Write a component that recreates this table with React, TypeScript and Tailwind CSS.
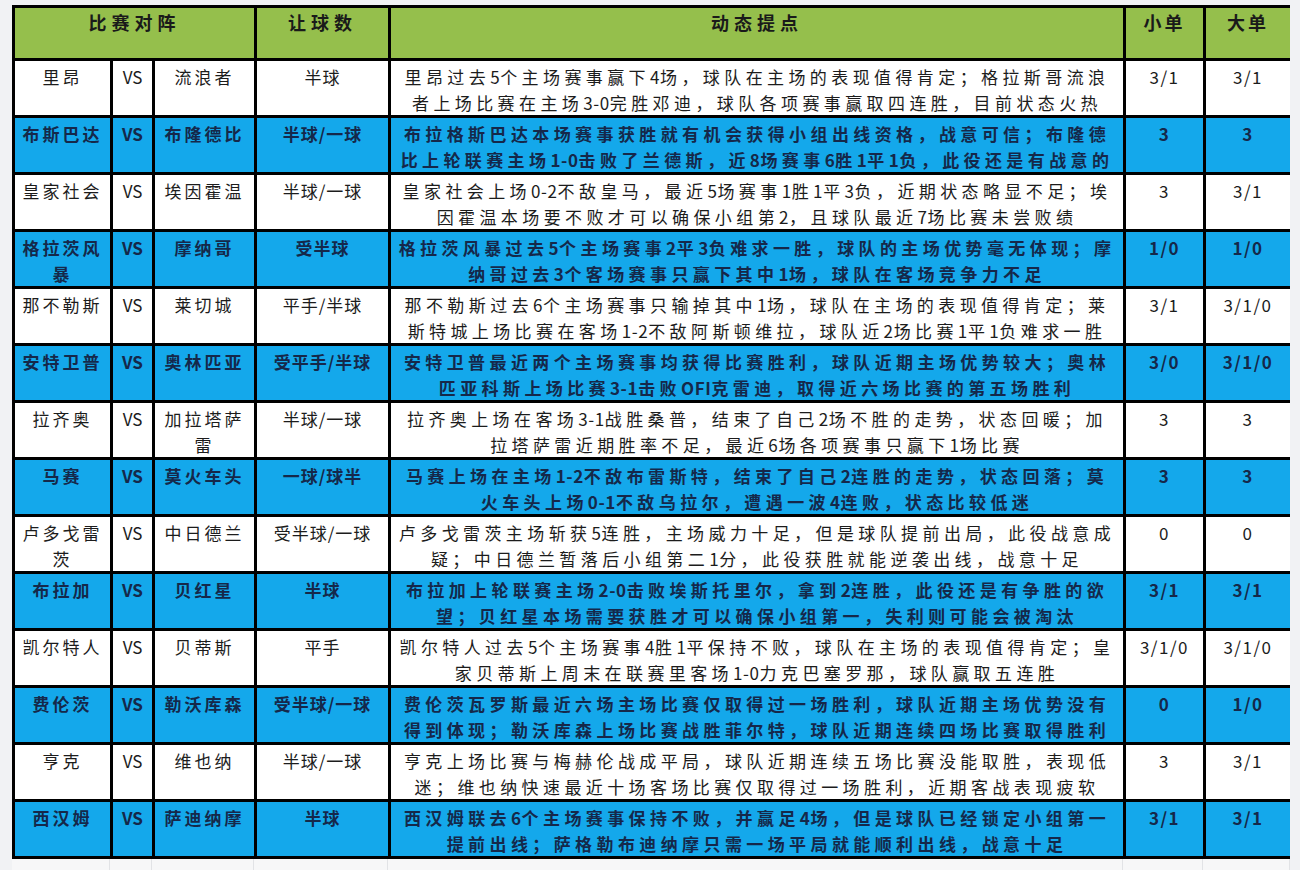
type Row = {
  home: string[];
  away: string[];
  handicap: string;
  lines: [string, string];
  small: string;
  big: string;
};

const rows: Row[] = [
  {
    home: ["里昂"],
    away: ["流浪者"],
    handicap: "半球",
    lines: [
      "里昂过去5个主场赛事赢下4场，球队在主场的表现值得肯定；格拉斯哥流浪",
      "者上场比赛在主场3-0完胜邓迪，球队各项赛事赢取四连胜，目前状态火热",
    ],
    small: "3/1",
    big: "3/1",
  },
  {
    home: ["布斯巴达"],
    away: ["布隆德比"],
    handicap: "半球/一球",
    lines: [
      "布拉格斯巴达本场赛事获胜就有机会获得小组出线资格，战意可信；布隆德",
      "比上轮联赛主场1-0击败了兰德斯，近8场赛事6胜1平1负，此役还是有战意的",
    ],
    small: "3",
    big: "3",
  },
  {
    home: ["皇家社会"],
    away: ["埃因霍温"],
    handicap: "半球/一球",
    lines: [
      "皇家社会上场0-2不敌皇马，最近5场赛事1胜1平3负，近期状态略显不足；埃",
      "因霍温本场要不败才可以确保小组第2，且球队最近7场比赛未尝败绩",
    ],
    small: "3",
    big: "3/1",
  },
  {
    home: ["格拉茨风", "暴"],
    away: ["摩纳哥"],
    handicap: "受半球",
    lines: [
      "格拉茨风暴过去5个主场赛事2平3负难求一胜，球队的主场优势毫无体现；摩",
      "纳哥过去3个客场赛事只赢下其中1场，球队在客场竞争力不足",
    ],
    small: "1/0",
    big: "1/0",
  },
  {
    home: ["那不勒斯"],
    away: ["莱切城"],
    handicap: "平手/半球",
    lines: [
      "那不勒斯过去6个主场赛事只输掉其中1场，球队在主场的表现值得肯定；莱",
      "斯特城上场比赛在客场1-2不敌阿斯顿维拉，球队近2场比赛1平1负难求一胜",
    ],
    small: "3/1",
    big: "3/1/0",
  },
  {
    home: ["安特卫普"],
    away: ["奥林匹亚"],
    handicap: "受平手/半球",
    lines: [
      "安特卫普最近两个主场赛事均获得比赛胜利，球队近期主场优势较大；奥林",
      "匹亚科斯上场比赛3-1击败OFI克雷迪，取得近六场比赛的第五场胜利",
    ],
    small: "3/0",
    big: "3/1/0",
  },
  {
    home: ["拉齐奥"],
    away: ["加拉塔萨", "雷"],
    handicap: "半球/一球",
    lines: [
      "拉齐奥上场在客场3-1战胜桑普，结束了自己2场不胜的走势，状态回暖；加",
      "拉塔萨雷近期胜率不足，最近6场各项赛事只赢下1场比赛",
    ],
    small: "3",
    big: "3",
  },
  {
    home: ["马赛"],
    away: ["莫火车头"],
    handicap: "一球/球半",
    lines: [
      "马赛上场在主场1-2不敌布雷斯特，结束了自己2连胜的走势，状态回落；莫",
      "火车头上场0-1不敌乌拉尔，遭遇一波4连败，状态比较低迷",
    ],
    small: "3",
    big: "3",
  },
  {
    home: ["卢多戈雷", "茨"],
    away: ["中日德兰"],
    handicap: "受半球/一球",
    lines: [
      "卢多戈雷茨主场斩获5连胜，主场威力十足，但是球队提前出局，此役战意成",
      "疑；中日德兰暂落后小组第二1分，此役获胜就能逆袭出线，战意十足",
    ],
    small: "0",
    big: "0",
  },
  {
    home: ["布拉加"],
    away: ["贝红星"],
    handicap: "半球",
    lines: [
      "布拉加上轮联赛主场2-0击败埃斯托里尔，拿到2连胜，此役还是有争胜的欲",
      "望；贝红星本场需要获胜才可以确保小组第一，失利则可能会被淘汰",
    ],
    small: "3/1",
    big: "3/1",
  },
  {
    home: ["凯尔特人"],
    away: ["贝蒂斯"],
    handicap: "平手",
    lines: [
      "凯尔特人过去5个主场赛事4胜1平保持不败，球队在主场的表现值得肯定；皇",
      "家贝蒂斯上周末在联赛里客场1-0力克巴塞罗那，球队赢取五连胜",
    ],
    small: "3/1/0",
    big: "3/1/0",
  },
  {
    home: ["费伦茨"],
    away: ["勒沃库森"],
    handicap: "受半球/一球",
    lines: [
      "费伦茨瓦罗斯最近六场主场比赛仅取得过一场胜利，球队近期主场优势没有",
      "得到体现；勒沃库森上场比赛战胜菲尔特，球队近期连续四场比赛取得胜利",
    ],
    small: "0",
    big: "1/0",
  },
  {
    home: ["亨克"],
    away: ["维也纳"],
    handicap: "半球/一球",
    lines: [
      "亨克上场比赛与梅赫伦战成平局，球队近期连续五场比赛没能取胜，表现低",
      "迷；维也纳快速最近十场客场比赛仅取得过一场胜利，近期客战表现疲软",
    ],
    small: "3",
    big: "3/1",
  },
  {
    home: ["西汉姆"],
    away: ["萨迪纳摩"],
    handicap: "半球",
    lines: [
      "西汉姆联去6个主场赛事保持不败，并赢足4场，但是球队已经锁定小组第一",
      "提前出线；萨格勒布迪纳摩只需一场平局就能顺利出线，战意十足",
    ],
    small: "3/1",
    big: "3/1",
  },
];

const font = { fontFamily: '"Noto Sans CJK SC", "Noto Sans", sans-serif' };

// ASCII runs (digits, dashes, letters) get tighter spacing than the CJK text
function Mixed({ text }: { text: string }) {
  const parts = text.split(/([\x20-\x7e]+)/).filter((p) => p !== "");
  return (
    <>
      {parts.map((p, i) =>
        /^[\x20-\x7e]+$/.test(p) ? (
          <span key={i} className="tracking-[0.6px]">
            {p}
          </span>
        ) : (
          <span key={i}>{p}</span>
        )
      )}
    </>
  );
}

function Lines({ items }: { items: string[] }) {
  return (
    <>
      {items.map((t, i) => (
        <div key={i} className="whitespace-nowrap">
          <Mixed text={t} />
        </div>
      ))}
    </>
  );
}

const head = "bg-[#95bf4c] pt-[1px] text-center text-[18px] font-bold leading-[26px] text-[#1a1a1a]";

export default function App() {
  return (
    <div className="min-h-[870px] w-[1300px] bg-[#f1f2f4] pt-[5px] pl-[12px]" style={font}>
      <div className="grid w-[1278px] grid-cols-[95px_39px_99px_131px_732px_77px_84px] gap-[3px] bg-black p-[3px]">
        {/* header */}
        <div className={`${head} col-span-3 h-[50px] tracking-[5px]`}>比赛对阵</div>
        <div className={`${head} tracking-[5px]`}>让球数</div>
        <div className={`${head} tracking-[5px]`}>动态提点</div>
        <div className={`${head} tracking-[3px]`}>小单</div>
        <div className={`${head} tracking-[3px]`}>大单</div>

        {rows.map((r, i) => {
          const blue = i % 2 === 1;
          const cell = blue
            ? "h-[54px] bg-[#14a8eb] pt-[3px] text-center text-[17px] leading-[26px] font-bold text-[#15284a]"
            : "h-[54px] bg-white pt-[3px] text-center text-[17px] leading-[26px] text-[#1c1c1c]";
          return (
            <div key={i} className="contents">
              <div className={`${cell} tracking-[3px]`}>
                <Lines items={r.home} />
              </div>
              <div className={`${cell} text-[15px] tracking-[0px]`}>VS</div>
              <div className={`${cell} tracking-[3px]`}>
                <Lines items={r.away} />
              </div>
              <div className={`${cell} tracking-[1px]`}>{r.handicap}</div>
              <div className={`${cell} flex flex-col items-center tracking-[4.4px]`}>
                <Lines items={r.lines} />
              </div>
              <div className={`${cell} tracking-[1.5px]`}>{r.small}</div>
              <div className={`${cell} tracking-[1.5px]`}>{r.big}</div>
            </div>
          );
        })}
      </div>
      <div className="grid h-[11px] w-[1278px] grid-cols-[98px_42px_102px_134px_735px_80px_87px] bg-[#f7f7f8]">
        <div className="border-r border-[#e2e3e6]"></div>
        <div className="border-r border-[#e2e3e6]"></div>
        <div className="border-r border-[#e2e3e6]"></div>
        <div className="border-r border-[#e2e3e6]"></div>
        <div className="border-r border-[#e2e3e6]"></div>
        <div className="border-r border-[#e2e3e6]"></div>
        <div className="border-r border-[#e2e3e6]"></div>
      </div>
    </div>
  );
}
